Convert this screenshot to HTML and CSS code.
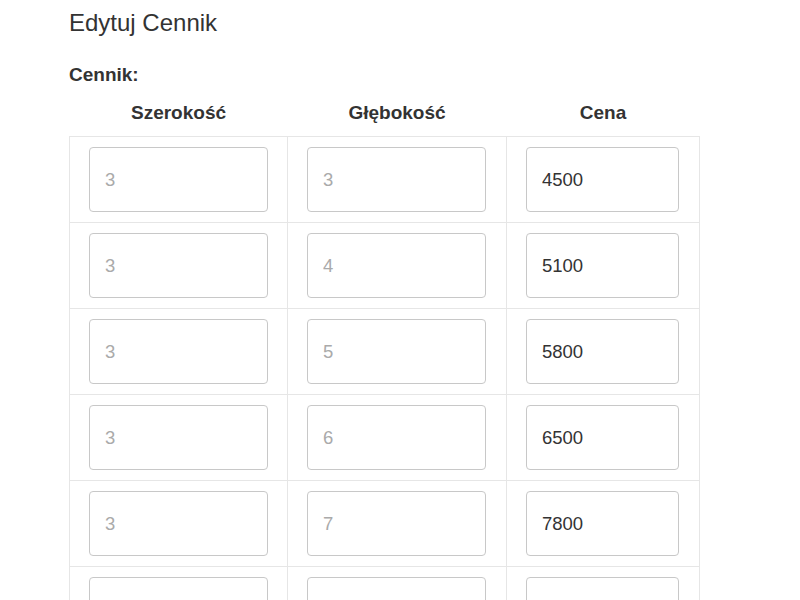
FILE: index.html
```html
<!DOCTYPE html>
<html lang="pl">
<head>
<meta charset="utf-8">
<title>Edytuj Cennik</title>
<link rel="stylesheet" href="styles.css">
</head>
<body>
<div class="page">
  <h1 class="title">Edytuj Cennik</h1>
  <div class="label">Cennik:</div>
  <table class="prices">
    <thead>
      <tr><th class="c1">Szerokość</th><th class="c2">Głębokość</th><th class="c3">Cena</th></tr>
    </thead>
    <tbody>
      <tr><td><input class="inp" placeholder="3"></td><td><input class="inp" placeholder="3"></td><td><input class="inp price" value="4500"></td></tr>
      <tr><td><input class="inp" placeholder="3"></td><td><input class="inp" placeholder="4"></td><td><input class="inp price" value="5100"></td></tr>
      <tr><td><input class="inp" placeholder="3"></td><td><input class="inp" placeholder="5"></td><td><input class="inp price" value="5800"></td></tr>
      <tr><td><input class="inp" placeholder="3"></td><td><input class="inp" placeholder="6"></td><td><input class="inp price" value="6500"></td></tr>
      <tr><td><input class="inp" placeholder="3"></td><td><input class="inp" placeholder="7"></td><td><input class="inp price" value="7800"></td></tr>
      <tr><td><input class="inp" placeholder="4"></td><td><input class="inp" placeholder="3"></td><td><input class="inp price" value="5100"></td></tr>
      <tr><td><input class="inp" placeholder="4"></td><td><input class="inp" placeholder="4"></td><td><input class="inp price" value="5800"></td></tr>
    </tbody>
  </table>
</div>
</body>
</html>
```
FILE: styles.css
```css
html, body {
  margin: 0;
  padding: 0;
  background: #fff;
}
body {
  font-family: "Liberation Sans", Arial, sans-serif;
  color: #333;
}
.page {
  padding: 0 0 0 69px;
}
.title {
  margin: 0;
  padding-top: 9px;
  font-size: 24px;
  font-weight: normal;
  line-height: 28px;
  color: #333;
}
.label {
  margin-top: 27px;
  font-size: 19px;
  font-weight: bold;
  line-height: 22px;
  color: #333;
}
.prices {
  border-collapse: collapse;
  margin-top: 0;
}
.prices th {
  font-size: 19px;
  font-weight: bold;
  line-height: 22px;
  padding: 16px 0 12px;
  text-align: center;
  color: #333;
}
.prices th.c1 { width: 218px; }
.prices th.c2 { width: 219px; }
.prices th.c3 { width: 193px; }
.prices td {
  border: 1px solid #e6e6e6;
  padding: 10px 0 10px 19px;
  vertical-align: top;
}
.inp {
  display: block;
  box-sizing: border-box;
  width: 179px;
  height: 65px;
  border: 1px solid #c8c8c8;
  border-radius: 4px;
  padding: 0 15px;
  font-family: "Liberation Sans", Arial, sans-serif;
  font-size: 18.5px;
  color: #333;
  background: #fff;
  outline: none;
}
.inp::placeholder {
  color: #aaa;
}
.inp.price {
  width: 153px;
}
```
